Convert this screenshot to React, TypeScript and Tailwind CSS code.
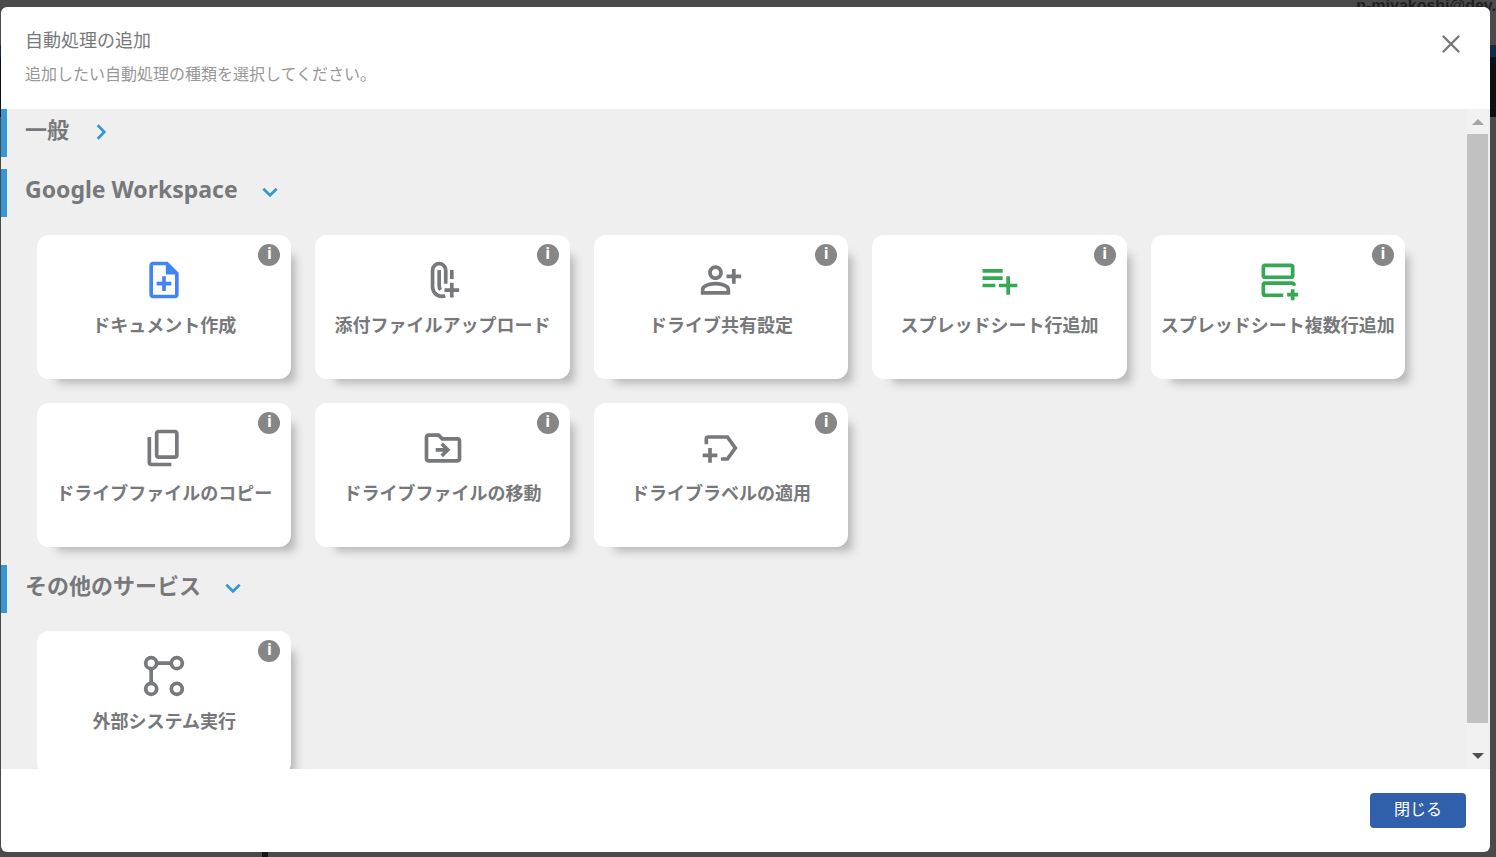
import { useState } from "react"
import type { ReactNode } from "react"

type Action = { name: string; color: string; icon: ReactNode }
type Section = { title: string; size: string; open: boolean; actions: Action[] }

const gray = "text-[#77787b]"

const sections: Section[] = [
  { title: "一般", size: "text-[22px]", open: false, actions: [] },
  {
    title: "Google Workspace",
    size: "text-[23px]",
    open: true,
    actions: [
      {
        name: "ドキュメント作成",
        color: "text-[#4284f3]",
        icon: <path d="M11 18h2v-3h3v-2h-3v-3h-2v3H8v2h3Zm-5 4q-.825 0-1.413-.587Q4 20.825 4 20V4q0-.825.587-1.413Q5.175 2 6 2h8l6 6v12q0 .825-.587 1.413Q18.825 22 18 22Zm7-13V4H6v16h12V9Z" />,
      },
      {
        name: "添付ファイルアップロード",
        color: gray,
        icon: (
          <g fill="none" stroke="currentColor" strokeWidth="2">
            <path d="M13.500 14V6.700a3.600 3.600 0 0 0-7.200 0v9c0 3 2.300 5.200 5.200 5.200q.9 0 1.700-.3" />
            <path d="M9.900 6.500v8.500q0 1.500 .8 2.400" />
            <path d="M16.800 6.500v5M16.800 13.500v8M12.800 17.500h8" />
          </g>
        ),
      },
      {
        name: "ドライブ共有設定",
        color: gray,
        icon: <path d="M20 9V6h-2v3h-3v2h3v3h2v-3h3V9h-3zM9 12c2.21 0 4-1.79 4-4s-1.79-4-4-4-4 1.79-4 4 1.790 4 4 4zm0-6c1.100 0 2 .9 2 2s-.9 2-2 2-2-.9-2-2 .9-2 2-2zM15.390 14.560C13.710 13.700 11.530 13 9 13s-4.710.7-6.390 1.560A2.970 2.970 0 0 0 1 17.220V20h16v-2.780c0-1.120-.61-2.150-1.610-2.660zM15 18H3v-.78c0-.38.2-.72.52-.88C4.710 15.730 6.630 15 9 15c2.370 0 4.290.73 5.480 1.340.32.16.52.5.52.88V18z" />,
      },
      {
        name: "スプレッドシート行追加",
        color: "text-[#34a853]",
        icon: <path d="M14 10H3v2h11v-2zm0-4H3v2h11V6zm4 8v-4h-2v4h-4v2h4v4h2v-4h4v-2h-4zM3 16h7v-2H3v2z" />,
      },
      {
        name: "スプレッドシート複数行追加",
        color: "text-[#34a853]",
        icon: (
          <g fill="none" stroke="currentColor" strokeWidth="2">
            <rect x="4" y="4" width="16" height="6.500" rx="1" />
            <path d="M20.900 15.200q-.2-1.500-1.400-1.500H5q-1 0-1 1v4.600q0 1 1 1h9.800" />
            <path d="M20 17v6M17 20h6" />
          </g>
        ),
      },
      {
        name: "ドライブファイルのコピー",
        color: gray,
        icon: <path d="M9 18q-.825 0-1.412-.587Q7 16.825 7 16V4q0-.825.588-1.413Q8.175 2 9 2h9q.825 0 1.413.587Q20 3.175 20 4v12q0 .825-.587 1.413Q18.825 18 18 18Zm0-2h9V4H9v12Zm-4 6q-.825 0-1.413-.587Q3 20.825 3 20V6h2v14h11v2Z" />,
      },
      {
        name: "ドライブファイルの移動",
        color: gray,
        icon: <path d="M4 20q-.825 0-1.412-.587Q2 18.825 2 18V6q0-.825.588-1.412Q3.175 4 4 4h6l2 2h8q.825 0 1.413.588Q22 7.175 22 8v10q0 .825-.587 1.413Q20.825 20 20 20Zm0-2h16V8h-8.825l-2-2H4v12Zm8-1 4-4-4-4-1.400 1.400 1.600 1.600H8v2h4.200l-1.600 1.600Z" />,
      },
      {
        name: "ドライブラベルの適用",
        color: gray,
        icon: (
          <g fill="none" stroke="currentColor" strokeWidth="2">
            <path d="M4 10V7a1 1 0 0 1 1-1h10.500l4.300 6-4.300 6H12" />
            <path d="M6 12v8M2 16h8" />
          </g>
        ),
      },
    ],
  },
  {
    title: "その他のサービス",
    size: "text-[22px]",
    open: true,
    actions: [
      {
        name: "外部システム実行",
        color: gray,
        icon: (
          <g fill="none" stroke="currentColor" strokeWidth="2">
            <circle cx="5" cy="5" r="3" />
            <circle cx="19" cy="5" r="3" />
            <circle cx="5" cy="19" r="3" />
            <circle cx="19" cy="19" r="3" />
            <path d="M8 5h8M5 8v8" />
          </g>
        ),
      },
    ],
  },
]

function ActionCard({ action }: { action: Action }) {
  return (
    <div className="relative h-36 rounded-xl bg-white shadow-[12px_12px_10px_-8px_#b4b4b4]">
      <button className="flex h-full w-full flex-col items-center pt-[23px]">
        <svg viewBox="0 0 24 24" fill="currentColor" className={"size-11 shrink-0 " + action.color}>
          {action.icon}
        </svg>
        <span className="mt-[9px] whitespace-nowrap text-lg font-bold leading-7">{action.name}</span>
      </button>
      <button
        className="absolute right-[11px] top-[9px] flex size-[22px] items-center justify-center rounded-full bg-[#868686] pb-1 font-['Open_Sans',sans-serif] text-base font-bold leading-4 text-white"
        aria-label={action.name + "の説明"}
      >
        i
      </button>
    </div>
  )
}

function SectionBlock({ section }: { section: Section }) {
  const [open, setOpen] = useState(section.open)
  return (
    <section>
      <button
        onClick={() => setOpen(!open)}
        aria-expanded={open}
        className="flex h-12 w-full items-start border-l-6 border-[#3598d4] pl-[18px] pt-1"
      >
        <span className={"font-bold leading-8 " + section.size}>{section.title}</span>
        <svg viewBox="0 0 24 24" className="ml-5 mt-[7px] size-6 text-[#3598d4]" fill="none" stroke="currentColor" strokeWidth="2.700">
          {open ? <path d="m5.300 8.700 6.700 6.600 6.700-6.600" /> : <path d="m8.700 5.300 6.600 6.700-6.600 6.700" />}
        </svg>
      </button>
      {open && section.actions.length > 0 && (
        <div className="grid grid-cols-5 gap-6 py-[18px] pl-9 pr-[62px]">
          {section.actions.map(a => <ActionCard key={a.name} action={a} />)}
        </div>
      )}
      {!open && <div className="h-3" />}
    </section>
  )
}

export default function App() {
  return (
    <div className="relative h-screen overflow-hidden bg-[#4a4a4a] font-['Noto_Sans','Noto_Sans_CJK_JP',sans-serif] text-[#77787b]">

      {/* Dimmed page behind the dialog */}
      <div className="absolute inset-0 flex flex-col">
        <div className="h-[45px] text-right font-['Liberation_Sans',sans-serif] text-base font-bold leading-3 text-[#1f1f1f]">
          n-miyakoshi@dev.
        </div>
        <div className="h-3 bg-[#0e2c4c]" />
        <div className="h-[60px] bg-[#0b1015]" />
        <div className="grow bg-[#4a4a4a]" />
        <div className="ml-[262px] h-[6px] w-[6px] bg-[#161616]" />
      </div>

      <div className="relative flex h-full pb-[5px] pl-px pr-[6px] pt-[7px]">
        <div role="dialog" aria-label="自動処理の追加" className="flex min-w-0 grow flex-col overflow-hidden rounded-md bg-white">

          <header className="flex h-[102px] shrink-0 items-start justify-between pl-6 pr-[27px] pt-[19px]">
            <div>
              <h1 className="text-lg leading-7">自動処理の追加</h1>
              <p className="mt-2 text-base leading-6 text-[#979797]">追加したい自動処理の種類を選択してください。</p>
            </div>
            <button aria-label="閉じる" className="mt-[6px]">
              <svg viewBox="0 0 24 24" className="size-6" fill="none" stroke="currentColor" strokeWidth="2.400" strokeLinecap="round">
                <path d="m4.500 4.500 15 15M19.500 4.500l-15 15" />
              </svg>
            </button>
          </header>

          <main className="flex min-h-0 grow bg-[#efefef]">
            <div className="min-w-0 grow overflow-hidden">
              {sections.map(s => <SectionBlock key={s.title} section={s} />)}
            </div>
            {/* Scrollbar */}
            <div className="mr-[2px] flex w-[21px] shrink-0 flex-col items-center bg-[#f1f1f1]">
              <svg viewBox="0 0 12 6" className="mb-[9px] mt-[10px] h-[6px] w-3 shrink-0 fill-[#a3a3a3]"><path d="M0 6 6 0l6 6z" /></svg>
              <div className="w-full grow bg-[#c1c1c1]" />
              <svg viewBox="0 0 12 6" className="mb-[10px] mt-[30px] h-[6px] w-3 shrink-0 fill-[#505050]"><path d="M0 0h12L6 6z" /></svg>
            </div>
          </main>

          <footer className="flex h-[83px] shrink-0 items-start justify-end pr-6 pt-6">
            <button className="h-[35px] rounded-sm bg-[#3060ab] px-6 pb-1 text-base text-white">閉じる</button>
          </footer>
        </div>
      </div>
    </div>
  )
}
